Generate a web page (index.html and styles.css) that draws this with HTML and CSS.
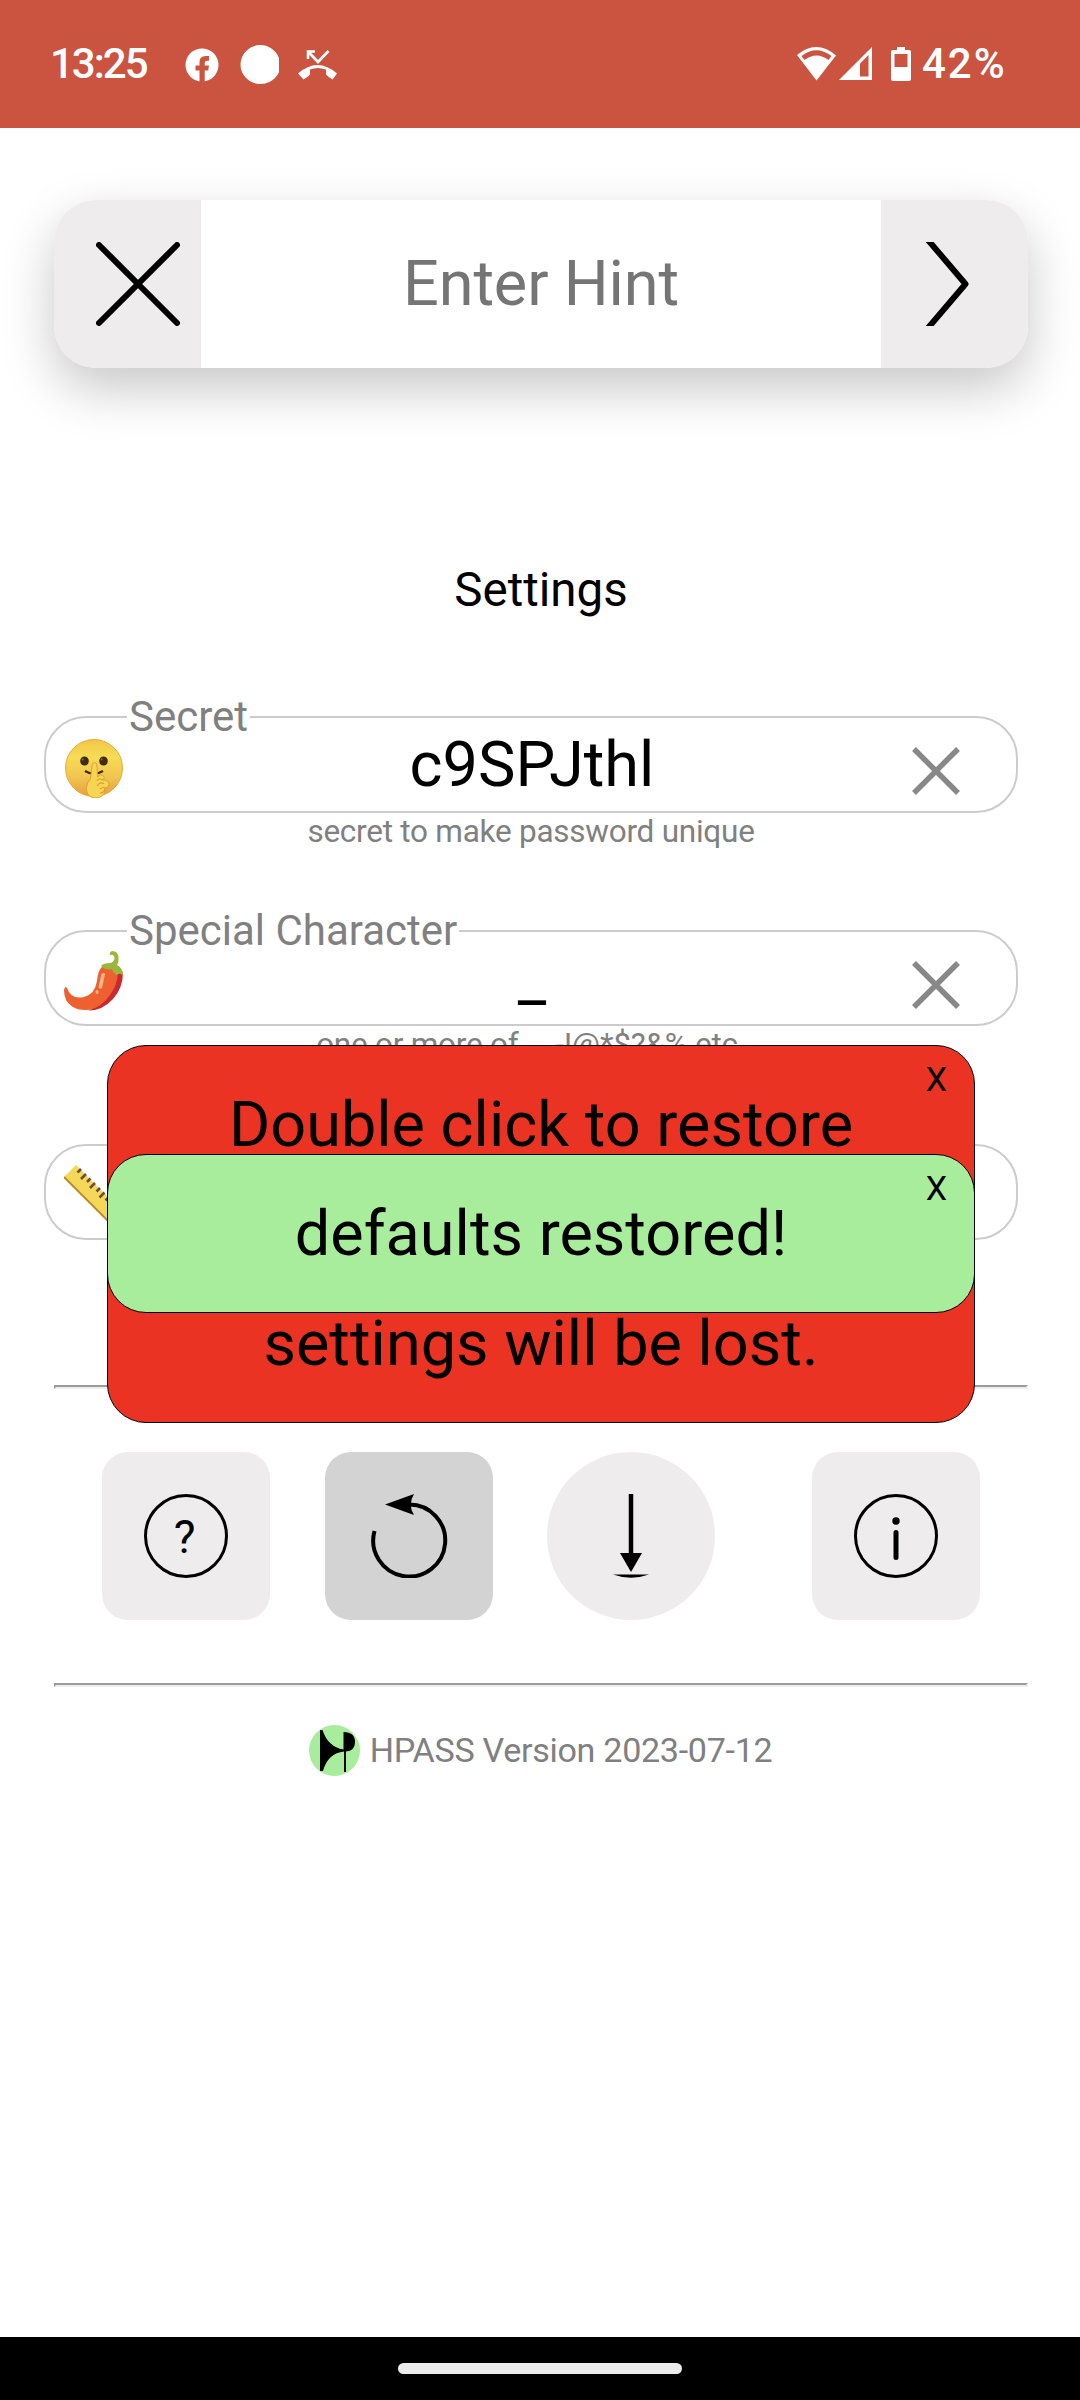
FILE: index.html
```html
<!DOCTYPE html>
<html lang="en">
<head>
<meta charset="utf-8">
<title>HPASS</title>
<link rel="stylesheet" href="styles.css">
</head>
<body>
<header class="status">
  <span class="clock">13:25</span>
  <svg class="status-icons" width="160" height="44" viewBox="180 44 160 44">
    <circle cx="202" cy="65" r="16.5" fill="#fff"/>
    <path d="M199.500 82V70.500H195.500V65.500H199.500V62Q199.500 56 205.500 56H209V60.800H207Q204.700 60.800 204.700 63V65.500H209L208.200 70.500H204.700V82Z" fill="#cb5440"/>
    <path d="M259.500 45A20 19.500 0 0 1 279 58V72A20 19.500 0 1 1 259.500 45Z" fill="#fff"/>
    <path d="M298 73.500Q317.500 56.500 337 73.500L332.500 79.500Q329 77.800 326 74.500V69.500Q317.500 66.500 310 69.500V74.500Q307 77.800 303.500 79.500Z" fill="#fff"/>
    <path d="M308 59V51.500H315M308.500 52L318 62L328.500 51" fill="none" stroke="#fff" stroke-width="2.600"/>
  </svg>
  <svg class="signal-icons" width="118" height="44" viewBox="796 44 118 44">
    <path d="M797 55Q816.500 39 836 55.500L816.500 80.500Z" fill="#fff"/>
    <path d="M801.500 56Q816.500 44.500 831.500 56L828.500 60Q816.500 51 804.500 60Z" fill="#cb5440"/>
    <path d="M839 80L872 47V80Z" fill="#fff"/>
    <path d="M860 63.500L868.500 55V76.500H860Z" fill="#cb5440"/>
    <path d="M897 47H905V50H909Q911 50 911 52V79Q911 81 909 81H893Q891 81 891 79V52Q891 50 893 50H897Z" fill="#fff"/>
    <path d="M894.500 54H907.500V67H894.500Z" fill="#cb5440"/>
  </svg>
  <span class="charge">42%</span>
</header>

<main class="page">
  <div class="hint">
    <button class="hint-btn hint-clear"><svg width="84" height="84" viewBox="0 0 84 84"><path d="M3 3L81 81M81 3L3 81" fill="none" stroke="#000" stroke-width="6" stroke-linecap="round"/></svg></button>
    <div class="hint-text">Enter Hint</div>
    <button class="hint-btn hint-go"><svg width="84" height="84" viewBox="0 0 84 84"><path d="M21 -2L58.500 42L21 86" fill="none" stroke="#000" stroke-width="6" stroke-linejoin="round"/></svg></button>
  </div>

  <h1 class="title">Settings</h1>

  <section class="fields">
    <div class="field">
      <div class="box">
        <span class="legend">Secret</span>
        <svg class="emoji" width="60" height="60" viewBox="0 0 60 60">
          <defs>
            <linearGradient id="skin" x1="0" y1="0" x2="0" y2="1"><stop offset="0" stop-color="#f2c544"/><stop offset=".3" stop-color="#f7dc55"/><stop offset=".65" stop-color="#f0c650"/><stop offset="1" stop-color="#e79e3b"/></linearGradient>
          </defs>
          <circle cx="30" cy="30" r="28.500" fill="url(#skin)" stroke="#e8ab3e"/>
          <ellipse cx="20.500" cy="23" rx="4.300" ry="4.500" fill="#422b0d"/>
          <ellipse cx="39.500" cy="23" rx="4.300" ry="4.500" fill="#422b0d"/>
          <circle cx="18.800" cy="21.500" r="1" fill="#8a6731"/><circle cx="37.800" cy="21.500" r="1" fill="#8a6731"/>
          <path d="M21 33Q30 38.500 39 33" fill="none" stroke="#422b0d" stroke-width="2.200"/>
          <path d="M28 28Q28 24.500 30.500 24.500Q33 24.500 33 28L33.500 39Q36 35.500 39 37.500Q41.500 39.500 39 42Q45 42 45 46Q45 50 41 50Q41.500 60 31 60Q22 59 22.500 50Q23 44 26.500 41Z" fill="#f6d650" stroke="#e3a03a"/>
          <path d="M33 43Q35 39.500 39 42M33 48Q36 43.500 40 45.500M36 51Q39 48.500 41 50M36 55Q40 55 41 51" fill="none" stroke="#df9a37" stroke-width="1.100"/>
        </svg>
        <span class="value">c9SPJthl</span>
        <svg class="clear" width="48" height="48" viewBox="0 0 48 48"><path d="M2 2L46 46M46 2L2 46" stroke="#888" stroke-width="5.500"/></svg>
      </div>
      <p class="help">secret to make password unique</p>
    </div>
    <div class="field">
      <div class="box short">
        <span class="legend">Special Character</span>
        <svg class="emoji" width="60" height="60" viewBox="0 0 60 60">
          <path d="M38 16Q34 19 33 30Q31 43 20 46Q7 49 3 37Q1 34.500 0 39Q0 50 8 55.500Q17 61 30 58Q46 54 53 40Q58 31 58 20Q48 12 38 16Z" fill="#ee602f"/>
          <path d="M54 22L59 21Q59 37 49 48Q38 60 24 59.500Q38 56 46 44Q53 35 54 22Z" fill="#c92a30"/>
          <path d="M37 15Q39 12 47 12Q52 9 50 5Q48 3 46 4Q45 1 48 0Q54 0 54.500 6Q55 11 53 14Q59 17 59.500 25Q56 21 53 24Q49 22 48 18Q42 20 37 15Z" fill="#9bb63c"/>
          <path d="M37.500 23Q40 21 41 23L38 37Q35 39 34.500 36Z" fill="#f9b983"/><ellipse cx="33" cy="41" rx="1.500" ry="2" fill="#f9b983"/>
        </svg>
        <span class="value">_</span>
        <svg class="clear" width="48" height="48" viewBox="0 0 48 48"><path d="M2 2L46 46M46 2L2 46" stroke="#888" stroke-width="5.500"/></svg>
      </div>
      <p class="help chars">one or more of _ .-!@*$?&amp;% etc.</p>
    </div>
    <div class="field">
      <div class="box short">
        <svg class="emoji" width="60" height="60" viewBox="0 0 60 60">
          <path d="M0 12L12 0L60 48L48 60Z" fill="#f6d858"/>
          <path d="M0 12L48 60" stroke="#bd8b2d" stroke-width="2"/>
          <path d="M17 4L13.500 7.500M22 9L17 14M26.500 13.500L23 17M31 18L26 23M36 23L32.500 26.500M40.500 27.500L35.500 32.500M45 32L41.500 35.500" stroke="#6d4c41" stroke-width="2.600"/>
        </svg>
      </div>
    </div>
  </section>

  <div class="rule"></div>
  <nav class="actions">
    <button class="action">
      <svg width="84" height="84" viewBox="0 0 84 84"><circle cx="42" cy="42" r="40.500" fill="none" stroke="#000" stroke-width="3"/><text class="mark" x="40.500" y="58.500" text-anchor="middle">?</text></svg>
    </button>
    <button class="action pressed">
      <svg width="84" height="84" viewBox="0 0 84 84"><path d="M7.500 37A36 36 0 1 0 42 10.500" fill="none" stroke="#000" stroke-width="4"/><path d="M18 10.500L47 0Q40.500 10.500 47 21Z"/></svg>
    </button>
    <button class="action round">
      <svg width="84" height="84" viewBox="0 0 84 84"><path d="M42 0V62" stroke="#000" stroke-width="4.500"/><path d="M31 59H53L42 78Z"/><path d="M24 80.500H60Q42 87 24 80.500Z"/></svg>
    </button>
    <button class="action info">
      <svg width="84" height="84" viewBox="0 0 84 84"><circle cx="42" cy="42" r="40.500" fill="none" stroke="#000" stroke-width="3"/><circle cx="42" cy="27" r="3.700"/><path d="M42 38.500V63.500" stroke="#000" stroke-width="5" stroke-linecap="round"/></svg>
    </button>
  </nav>
  <div class="rule"></div>

  <footer class="version">
    <svg width="51" height="51" viewBox="0 0 51 51"><circle cx="25.500" cy="25.500" r="25.500" fill="#a8ed9c"/><path d="M11 5H13.500Q19 22 34.500 24.500V7Q46 7 46 17Q46 26 37 26.500V47H35V26.500Q19 28 14 46H11Z"/></svg>
    <span>HPASS Version 2023-07-12</span>
  </footer>
</main>

<div class="navbar"><div class="pill"></div></div>

<div class="toast warn">
  <span class="close">X</span>
  <p class="line">Double click to restore</p>
  <p class="line last">settings will be lost.</p>
</div>
<div class="toast done">
  <span class="close">X</span>
  <p class="line">defaults restored!</p>
</div>
</body>
</html>
```
FILE: styles.css
```css
* { box-sizing: border-box; }
body {
  margin: 0;
  width: 1080px;
  height: 2400px;
  display: flex;
  flex-direction: column;
  position: relative;
  overflow: hidden;
  background: #fff;
  font-family: Roboto, sans-serif;
  color: #000;
}
button { border: 0; padding: 0; display: flex; align-items: center; justify-content: center; }
p, h1 { margin: 0; font-weight: 400; }
svg { display: block; flex: none; }

.status { height: 128px; background: #cb5440; display: flex; align-items: center; color: #fff; flex: none; }
.clock, .charge { font-size: 42px; font-weight: 500; line-height: 50px; }
.clock { width: 130px; padding-left: 50px; box-sizing: content-box; letter-spacing: -2px; }
.status-icons { margin-top: 4px; }
.signal-icons { margin-left: 456px; margin-top: 4px; }
.charge { margin-left: 8px; letter-spacing: 2px; }

.page { flex: 1; display: flex; flex-direction: column; padding-top: 72px; }
.hint {
  width: 974px; height: 168px; margin-left: 54px; display: flex; flex: none;
  border-radius: 42px; background: #fff; overflow: hidden;
  box-shadow: 0 21px 52px rgba(0, 0, 0, .22);
}
.hint-btn { width: 147px; background: #eeeced; }
.hint-clear { padding-left: 21px; }
.hint-go { padding-right: 11px; }
.hint-text { flex: 1; text-align: center; font-size: 63px; line-height: 168px; letter-spacing: -.15px; color: #757575; }

.title { margin-top: 192px; height: 60px; line-height: 60px; font-size: 47.5px; text-align: center; padding-left: 2px; }

.fields { margin: 96px 0 0 44px; width: 974px; display: flex; flex-direction: column; }
.field { height: 214px; color: #808080; }
.box {
  position: relative; height: 97px; border: 2px solid #ccc; border-radius: 42px;
  display: flex; align-items: center; padding: 0 56px 0 18px;
}
.short { height: 96px; }
.legend {
  position: absolute; left: 81px; top: -25px; padding: 0 2px; height: 48px; line-height: 48px;
  font-size: 42px; background: #fff; white-space: nowrap;
}
.emoji { margin-top: 6px; }
.value { flex: 1; text-align: center; font-size: 63px; line-height: 80px; color: #000; margin-left: 28px; padding-top: 1px; }
.clear { margin-top: 13px; }
.help { font-size: 31.5px; line-height: 38px; text-align: center; letter-spacing: -.25px; }

.rule { width: 974px; height: 4px; margin-left: 54px; border: 2px solid; border-color: #9a9d9a #eee #eee #9a9d9a; flex: none; }
.fields + .rule { margin-top: 27px; }
.actions { display: flex; gap: 55px; margin: 63px 0 63px 102px; }
.action { width: 168px; height: 168px; border-radius: 26px; background: #eeeced; }
.pressed { background: #d3d3d3; }
.round { border-radius: 50%; margin-left: -1px; }
.info { margin-left: 42px; }
.mark { font: 46px Roboto, sans-serif; }
.version { margin-top: 38px; display: flex; justify-content: center; align-items: center; gap: 10px; font-size: 34.1px; letter-spacing: -.3px; color: #808080; padding-left: 1px; }
.version span { margin-top: -1px; }

.navbar { height: 63px; background: #000; display: flex; align-items: center; justify-content: center; flex: none; }
.pill { width: 284px; height: 11px; border-radius: 6px; background: #ebebeb; }

.toast {
  position: absolute; left: 107px; width: 868px; border: 1px solid #000; border-radius: 39px;
  text-align: center; font-size: 63px; padding-top: 24px;
}
.warn { top: 1045px; height: 378px; background: #ea3323; }
.done { top: 1154px; height: 159px; background: #a8ed9c; }
.line { line-height: 110px; }
.last { margin-top: 109px; }
.close { position: absolute; right: 27px; top: 11px; font-size: 34px; line-height: 44px; }
```
